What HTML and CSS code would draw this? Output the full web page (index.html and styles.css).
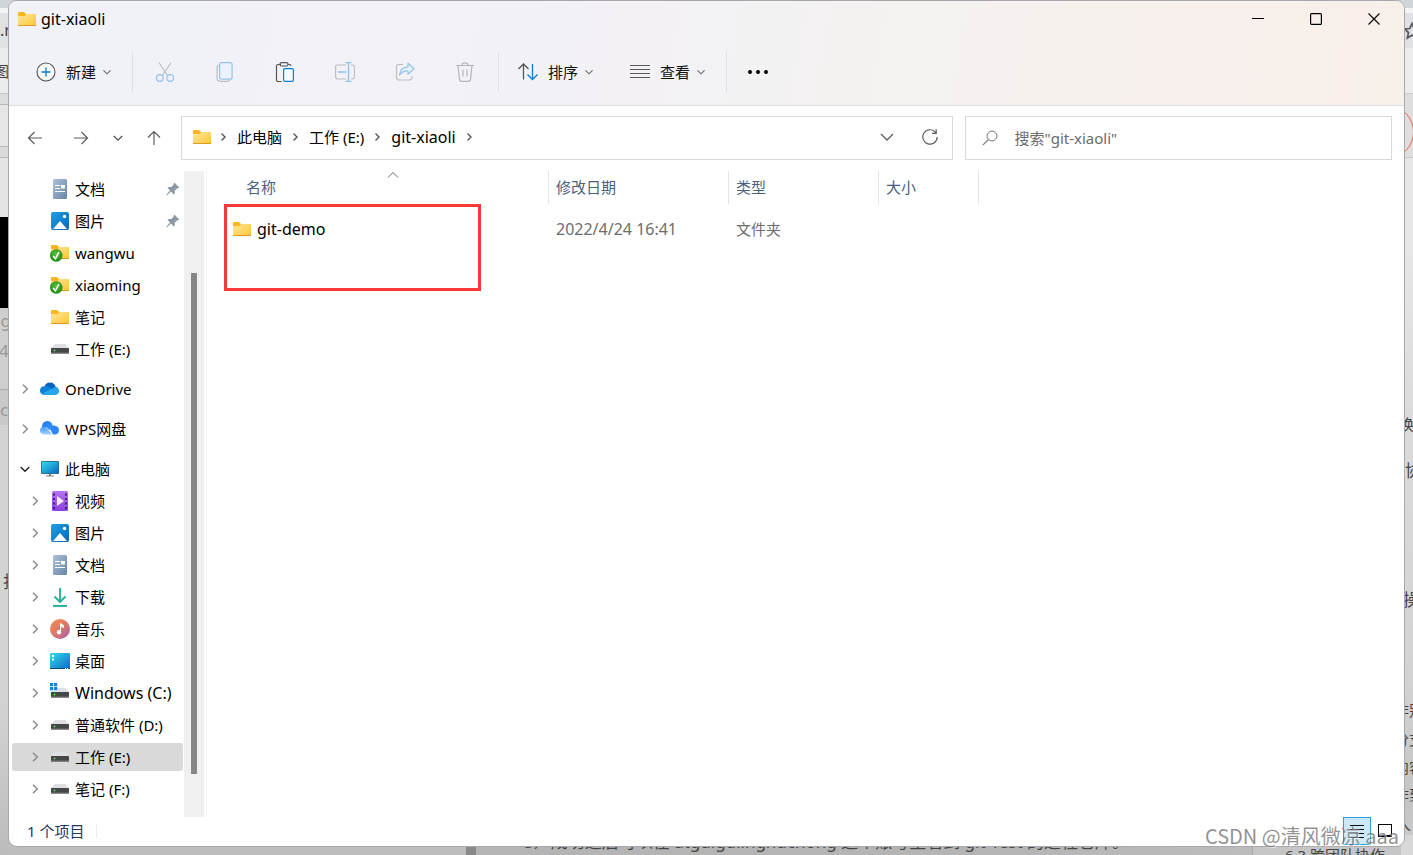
FILE: index.html
```html
<!DOCTYPE html>
<html lang="zh-CN">
<head>
<meta charset="utf-8">
<title>git-xiaoli</title>
<link rel="stylesheet" href="styles.css">
</head>
<body>
<svg class="sprite" aria-hidden="true">
  <defs>
    <linearGradient id="gFolder" x1="0" y1="0" x2="1" y2="1"><stop offset="0" stop-color="#ffe69a"/><stop offset="1" stop-color="#fdc636"/></linearGradient>
    <linearGradient id="gPic" x1="0" y1="0" x2="1" y2="1"><stop offset="0" stop-color="#1da3e8"/><stop offset="1" stop-color="#0a63b5"/></linearGradient>
    <linearGradient id="gDoc" x1="0" y1="0" x2="1" y2="1"><stop offset="0" stop-color="#adc2d8"/><stop offset="1" stop-color="#6684a6"/></linearGradient>
    <linearGradient id="gVid" x1="0" y1="0" x2="0" y2="1"><stop offset="0" stop-color="#b873f5"/><stop offset="1" stop-color="#8a3fe0"/></linearGradient>
    <linearGradient id="gMus" x1="0" y1="0" x2="1" y2="1"><stop offset="0" stop-color="#f3914f"/><stop offset=".5" stop-color="#dd7668"/><stop offset="1" stop-color="#a15fb4"/></linearGradient>
    <linearGradient id="gDesk" x1="0" y1="0" x2="1" y2="1"><stop offset="0" stop-color="#32dcea"/><stop offset="1" stop-color="#0a69c4"/></linearGradient>
    <linearGradient id="gWps" x1="0" y1="0" x2="1" y2="1"><stop offset="0" stop-color="#1c6df5"/><stop offset="1" stop-color="#3aa0ff"/></linearGradient>
    <linearGradient id="gWpsLight" x1="0" y1="0" x2="0" y2="1"><stop offset="0" stop-color="#3f94ff"/><stop offset="1" stop-color="#a4d3ff"/></linearGradient>
    <radialGradient id="gOk" cx=".5" cy=".35" r=".65"><stop offset="0" stop-color="#58c43a"/><stop offset="1" stop-color="#1d8a10"/></radialGradient>
  </defs>
  <symbol id="folder" viewBox="0 0 20 20">
    <path d="M1 4.2Q1 3 2.2 3H7l2 2v4H1z" fill="#fcb61c"/>
    <path d="M1 7h6.500l2-2H19v12H1z" fill="url(#gFolder)"/>
    <path d="M1 16h18v.4q0 .6-.8.600H1.800q-.8 0-.8-.6z" fill="#dd9b20"/>
  </symbol>
  <symbol id="folder-ok" viewBox="0 0 20 20">
    <path d="M1 3.200Q1 2 2.200 2H7l2 2v4H1z" fill="#fcb61c"/>
    <path d="M1 6h6.500l2-2H19v12H1z" fill="url(#gFolder)"/>
    <path d="M10 15h9v1h-9z" fill="#dd9b20"/>
    <circle cx="6.200" cy="12.500" r="6" fill="url(#gOk)" stroke="#17750c" stroke-width=".5"/>
    <path d="M3.200 13l2.200 2.800L9 9" fill="none" stroke="#fff" stroke-width="1.600"/>
  </symbol>
  <symbol id="doc" viewBox="0 0 20 20">
    <rect x="3" y="0" width="14" height="20" rx="1.500" fill="url(#gDoc)"/>
    <path d="M5 6.500h5M5 9.500h5M5 12.500h10" stroke="#fff" stroke-width="1.200"/><path d="M11 6h4v3.500h-4z" fill="#fff"/>
  </symbol>
  <symbol id="pic" viewBox="0 0 20 20">
    <rect x="1" y="1" width="18" height="18" rx="2" fill="url(#gPic)"/>
    <path d="M3 18L10 10l7 8z" fill="#f4faff"/><circle cx="14.500" cy="5.500" r="1.700" fill="#fff"/>
  </symbol>
  <symbol id="drive" viewBox="0 0 20 20">
    <path d="M4.500 5h11L19 9.500H1z" fill="#dfe0e3"/><rect x="1" y="9" width="18" height="5.500" rx=".6" fill="#454647"/><path d="M1 14h18" stroke="#727476"/><circle cx="4.500" cy="11.500" r=".9" fill="#3df04e"/>
  </symbol>
  <symbol id="drive-win" viewBox="0 0 20 20">
    <path d="M7 5h9l3 4.500H1V8h6z" fill="#dfe0e3"/><rect x="1" y="9" width="18" height="5.500" rx=".6" fill="#454647"/><path d="M1 14h18" stroke="#727476"/><circle cx="4.500" cy="11.500" r=".9" fill="#3df04e"/>
    <path d="M0 0h3.200v3.200H0zM4 0h3.200v3.200H4zM0 4h3.200v3.200H0zM4 4h3.200v3.200H4z" fill="#1482d6"/>
  </symbol>
  <symbol id="onedrive" viewBox="0 0 20 20">
    <path d="M4.500 7.500A5.800 5.800 0 0 1 15.600 8L11 12z" fill="#0763bd"/>
    <path d="M2 15.200A4.300 4.300 0 0 1 4.800 7.300Q7 6.600 9 8l5 3-9 5z" fill="#0d83d8"/>
    <path d="M14.500 7.500A4.300 4.300 0 0 1 17.500 15z" fill="#1490df"/>
    <path d="M2 15l9-5q3-2.300 6-1.200a3.900 3.900 0 0 1-1.500 7.200H4.500Q3 16 2 15z" fill="#27a6ea"/>
  </symbol>
  <symbol id="wps" viewBox="0 0 20 20">
    <path d="M2.200 8.500A5.300 5.300 0 0 1 12.500 6l-3 5z" fill="url(#gWps)"/>
    <path d="M9 8Q12 5 15.500 7a4.300 4.300 0 0 1-.5 8.500h-2z" fill="#2e86fa"/>
    <path d="M3.800 15.500a4 4 0 1 1 2.500-7.200L13 15.500z" fill="url(#gWpsLight)"/>
    <path d="M6 8.200l6.700 7.300" stroke="#fff" stroke-width=".7"/>
  </symbol>
  <symbol id="pc" viewBox="0 0 20 20">
    <rect x="1" y="2" width="18" height="13" rx="1" fill="#2b6888"/><rect x="1.800" y="2.800" width="16.400" height="11.400" fill="url(#gDesk)"/><path d="M9 15h2v1.500h3v1H6v-1h3z" fill="#7b8085"/>
  </symbol>
  <symbol id="video" viewBox="0 0 20 20">
    <rect x="2" y="0" width="16" height="20" rx="1.500" fill="url(#gVid)"/>
    <path d="M4 2.500v16M16 2.500v16" stroke="#43206f" stroke-width="2" stroke-dasharray="2 2.500"/><path d="M7 5v10l7-5z" fill="#f4ebff"/>
  </symbol>
  <symbol id="download" viewBox="0 0 20 20">
    <path d="M10 1v14M4.500 9.500L10 15l5.500-5.500" fill="none" stroke="#20ae94" stroke-width="1.800"/><path d="M3 18h14v1.800H3z" fill="#18aa98"/>
  </symbol>
  <symbol id="music" viewBox="0 0 20 20">
    <circle cx="10" cy="10" r="10" fill="url(#gMus)"/><path d="M10.500 13V4.500l3 2v2l-2-1.200" fill="#fff" stroke="#fff"/><circle cx="9" cy="13.200" r="2.200" fill="#fff"/>
  </symbol>
  <symbol id="desktop" viewBox="0 0 20 20">
    <rect x="0" y="2" width="20" height="16" rx="1" fill="url(#gDesk)"/><path d="M0 17h20v.4q0 .6-1 .6H1q-1 0-1-.6z" fill="#124b78"/><path d="M2 4h2v2H2zM2 7.500h2v2H2zM15 17h1v1h-1zM17 17h1v1h-1z" fill="#fff"/>
  </symbol>
  <symbol id="pin" viewBox="0 0 14 14">
    <path d="M8.500.8l4.700 4.700-1 .9-1-.1-2.500 2.500.2 2.700-1.100 1-2.900-2.900L1 13.200H.5v-.6l3.600-4L1.500 6l1-1.100 2.700.2 2.500-2.500-.2-.9z" fill="#8b98a4"/>
  </symbol>
  <symbol id="chev-r" viewBox="0 0 10 10"><path d="M3 .7L7.300 5 3 9.300" fill="none" stroke="currentColor" stroke-width="1.400"/></symbol>
  <symbol id="chev-s" viewBox="0 0 10 10"><path d="M3.500 1.500L7 5 3.500 8.500" fill="none" stroke="currentColor" stroke-width="1.400"/></symbol>
  <symbol id="chev-d" viewBox="0 0 10 10"><path d="M1.500 3.300L5 6.800l3.500-3.500" fill="none" stroke="currentColor" stroke-width="1.100"/></symbol>
  <symbol id="arrow-l" viewBox="0 0 16 16"><path d="M15 8H1.500M7.500 2L1.500 8l6 6" fill="none" stroke="#5c5c5c" stroke-width="1.200"/></symbol>
</svg>

<div class="backdrop" aria-hidden="true">
  <div class="edge edge-left"></div>
  <div class="edge edge-right"></div>
  <div class="edge edge-bottom"></div>
  <span class="bg dark l1">.r</span><span class="bg dark l2">图</span>
  <span class="bg pale l3">ng</span><span class="bg pale l4">4(</span><span class="bg pale l5">c</span><span class="bg dark l6">打</span>
  <svg class="star" width="18" height="18" viewBox="0 0 18 18"><path d="M9 1.500l2.200 5 5.300.5-4 3.600 1.200 5.400L9 13.200 4.300 16l1.200-5.400-4-3.600 5.300-.5z" fill="none" stroke="#55585c" stroke-width="1.700"/></svg>
  <span class="ring"></span>
  <span class="bg dark r1">换</span><span class="bg dark r2">协</span><span class="bg dark r3">操</span><span class="bg dark r4">作别</span><span class="bg dark r5">分支</span><span class="bg dark r6">内容</span><span class="bg dark r7">作到</span><span class="bg dark r8">人</span>
  <span class="bg dark b1">5）成功之后可以在 atguigulinghuchong 这个账号里看到 git-Test 的远程仓库。</span>
  <span class="bg dark b2">6.3 跨团队协作</span>
</div>

<main class="window">
  <header class="top">
    <div class="titlebar">
      <svg class="i20"><use href="#folder"/></svg>
      <h1 class="latin">git-xiaoli</h1>
      <div class="controls">
        <button aria-label="最小化"><svg width="12" height="12"><path d="M0 5.500h12" stroke="#000"/></svg></button>
        <button aria-label="最大化"><svg width="12" height="12"><rect x=".6" y=".6" width="10.800" height="10.800" rx="1" fill="none" stroke="#000" stroke-width="1.200"/></svg></button>
        <button aria-label="关闭"><svg width="12" height="12"><path d="M.5.500l11 11M11.500.500l-11 11" stroke="#000" stroke-width="1.100"/></svg></button>
      </div>
    </div>
    <div class="toolbar">
      <button class="cmd new"><svg class="i20" viewBox="0 0 20 20" fill="none"><circle cx="10" cy="10" r="9" fill="#fafafc" stroke="#555" stroke-width="1.100"/><path d="M10 5.500v9M5.500 10h9" stroke="#0c7bd0" stroke-width="1.300"/></svg>新建<svg class="i10"><use href="#chev-d"/></svg></button>
      <i class="sep"></i>
      <div class="tools">
        <button aria-label="剪切" disabled><svg class="i20" viewBox="0 0 20 20" fill="none" stroke-width="1.200"><path d="M4 .5l8.500 13M16 .5L7.500 13.500" stroke="#bcbec2"/><circle cx="4.800" cy="16" r="3.300" stroke="#93c4ea"/><circle cx="15.200" cy="16" r="3.300" stroke="#93c4ea"/></svg></button>
        <button aria-label="复制" disabled><svg class="i20" viewBox="0 0 20 20" fill="none" stroke-width="1.200"><path d="M3.500 3Q2 4 2 6v10q0 3.400 3.500 3.400H12q2 0 3-1.400" stroke="#bcbec2"/><rect x="4.600" y=".6" width="12.500" height="16.600" rx="2" fill="#ecf2f9" stroke="#93c4ea"/></svg></button>
        <button aria-label="粘贴"><svg class="i20" viewBox="0 0 20 20" fill="none" stroke-width="1.200"><path d="M6 2.500H3Q1.500 2.500 1.500 4v14q0 1.500 1.500 1.500h3.500M13 2.500h1.500q1.500 0 1.500 1.500" stroke="#555"/><rect x="5" y=".6" width="8" height="3.400" rx="1.500" stroke="#555"/><rect x="8.600" y="6.600" width="9.800" height="12.800" rx="1.500" fill="#f5faff" stroke="#0c7bd0"/></svg></button>
        <button aria-label="重命名" disabled><svg class="i20" viewBox="0 0 20 20" fill="none" stroke-width="1.200"><path d="M11 3H2Q.6 3 .6 4.500v10Q.6 17 2.500 17H11M16 3h1.500q2 0 2 2v9.500q0 2.500-2 2.500H16" stroke="#bcbec2"/><path d="M3 10h8M10.500.600h6M10.500 19.400h6M13.500.600v18.800" stroke="#93c4ea" stroke-width="1.500"/></svg></button>
        <button aria-label="共享" disabled><svg class="i20" viewBox="0 0 20 20" fill="none" stroke-width="1.200"><path d="M8 2.500H3.500Q1.500 2.500 1.500 5v10.500Q1.500 18 4 18h10q3 0 3-2.500V14" stroke="#bcbec2"/><path d="M13 1.200l6 5.500-6 5.500V9Q8 8.500 4.500 13 5 5.500 13 4.800z" fill="#ecf4fb" stroke="#93c4ea" stroke-linejoin="round"/></svg></button>
        <button aria-label="删除" disabled><svg class="i20" viewBox="0 0 20 20" fill="none" stroke="#b5b6b9" stroke-width="1.200"><path d="M1 3.500h18M7 3Q7 .800 10 .800T13 3M3 3.500l1.400 13.500q.2 2.300 2.500 2.300h6.200q2.300 0 2.500-2.300L17 3.500M8 7.500v7M12 7.500v7"/></svg></button>
      </div>
      <i class="sep"></i>
      <button class="cmd"><svg class="i20" viewBox="0 0 20 20" fill="none" stroke-width="1.300"><path d="M5.500 17.500V2M.5 7l5-5 5 5" stroke="#555"/><path d="M14.500 2v15.500M9.500 12.500l5 5 5-5" stroke="#0c7bd0"/></svg>排序<svg class="i10"><use href="#chev-d"/></svg></button>
      <button class="cmd view"><svg class="i20" viewBox="0 0 20 20"><path d="M0 3.500h20M0 7.500h20M0 11.500h20M0 15.500h20" stroke="#5a5a5a" stroke-width="1.100"/></svg>查看<svg class="i10"><use href="#chev-d"/></svg></button>
      <i class="sep"></i>
      <button class="more" aria-label="更多"><svg width="20" height="6"><circle cx="2" cy="3" r="2"/><circle cx="10" cy="3" r="2"/><circle cx="18" cy="3" r="2"/></svg></button>
    </div>
  </header>

  <div class="addressrow">
    <div class="history">
      <button aria-label="后退"><svg class="i16"><use href="#arrow-l"/></svg></button>
      <button aria-label="前进"><svg class="i16 flip"><use href="#arrow-l"/></svg></button>
      <button class="recent" aria-label="最近的位置"><svg width="12" height="12"><use href="#chev-d"/></svg></button>
      <button aria-label="向上"><svg class="i16 up"><use href="#arrow-l"/></svg></button>
    </div>
    <nav class="address" aria-label="地址">
      <svg class="i20"><use href="#folder"/></svg>
      <svg class="i10 crumb"><use href="#chev-s"/></svg><a href="#">此电脑</a>
      <svg class="i10 crumb"><use href="#chev-s"/></svg><a href="#">工作 (E:)</a>
      <svg class="i10 crumb"><use href="#chev-s"/></svg><a href="#" class="latin">git-xiaoli</a>
      <svg class="i10 crumb"><use href="#chev-s"/></svg>
      <button class="drop" aria-label="以前的位置"><svg class="i16" viewBox="0 0 16 16"><path d="M2 5l6 6 6-6" fill="none" stroke="#5c5c5c" stroke-width="1.300"/></svg></button>
      <button class="refresh" aria-label="刷新"><svg class="i16" viewBox="0 0 16 16"><path d="M13.500 3.300A7.200 7.200 0 1 0 15.200 8M14.200.300v4H10" fill="none" stroke="#5c5c5c" stroke-width="1.200"/></svg></button>
    </nav>
    <label class="search"><svg class="i16" viewBox="0 0 16 16"><circle cx="10" cy="6" r="4.900" fill="none" stroke="#777"/><path d="M6.500 9.500L.8 15.200" stroke="#777" stroke-width="1.100"/></svg><input type="text" placeholder='搜索"git-xiaoli"' aria-label="搜索"></label>
  </div>

  <div class="content">
    <aside class="sidebar">
      <ul class="tree">
        <li class="item sub"><svg class="i20"><use href="#doc"/></svg>文档<svg class="pin"><use href="#pin"/></svg></li>
        <li class="item sub"><svg class="i20"><use href="#pic"/></svg>图片<svg class="pin"><use href="#pin"/></svg></li>
        <li class="item sub"><svg class="i20"><use href="#folder-ok"/></svg>wangwu</li>
        <li class="item sub"><svg class="i20"><use href="#folder-ok"/></svg>xiaoming</li>
        <li class="item sub"><svg class="i20"><use href="#folder"/></svg>笔记</li>
        <li class="item sub"><svg class="i20"><use href="#drive"/></svg>工作 (E:)</li>
        <li class="item root"><svg class="i10 tw"><use href="#chev-r"/></svg><svg class="i20"><use href="#onedrive"/></svg>OneDrive</li>
        <li class="item root"><svg class="i10 tw"><use href="#chev-r"/></svg><svg class="i20"><use href="#wps"/></svg>WPS网盘</li>
        <li class="item root open"><svg class="i10 tw"><use href="#chev-r"/></svg><svg class="i20"><use href="#pc"/></svg>此电脑</li>
        <li class="item leaf"><svg class="i10 tw"><use href="#chev-r"/></svg><svg class="i20"><use href="#video"/></svg>视频</li>
        <li class="item leaf"><svg class="i10 tw"><use href="#chev-r"/></svg><svg class="i20"><use href="#pic"/></svg>图片</li>
        <li class="item leaf"><svg class="i10 tw"><use href="#chev-r"/></svg><svg class="i20"><use href="#doc"/></svg>文档</li>
        <li class="item leaf"><svg class="i10 tw"><use href="#chev-r"/></svg><svg class="i20"><use href="#download"/></svg>下载</li>
        <li class="item leaf"><svg class="i10 tw"><use href="#chev-r"/></svg><svg class="i20"><use href="#music"/></svg>音乐</li>
        <li class="item leaf"><svg class="i10 tw"><use href="#chev-r"/></svg><svg class="i20"><use href="#desktop"/></svg>桌面</li>
        <li class="item leaf latin"><svg class="i10 tw"><use href="#chev-r"/></svg><svg class="i20"><use href="#drive-win"/></svg>Windows (C:)</li>
        <li class="item leaf"><svg class="i10 tw"><use href="#chev-r"/></svg><svg class="i20"><use href="#drive"/></svg>普通软件 (D:)</li>
        <li class="item leaf selected"><svg class="i10 tw"><use href="#chev-r"/></svg><svg class="i20"><use href="#drive"/></svg>工作 (E:)</li>
        <li class="item leaf"><svg class="i10 tw"><use href="#chev-r"/></svg><svg class="i20"><use href="#drive"/></svg>笔记 (F:)</li>
      </ul>
      <div class="track"><div class="thumb"></div></div>
    </aside>
    <section class="files">
      <table>
        <colgroup><col class="c-name"><col class="c-date"><col class="c-type"><col class="c-size"></colgroup>
        <thead><tr><th class="name">名称<svg class="caret" width="12" height="8"><path d="M1 6.500l5-5 5 5" fill="none" stroke="#666"/></svg></th><th>修改日期</th><th>类型</th><th>大小</th></tr></thead>
        <tbody><tr><td><span class="file latin"><svg class="i20"><use href="#folder"/></svg>git-demo</span></td><td class="latin">2022/4/24 16:41</td><td>文件夹</td><td></td></tr></tbody>
      </table>
      <div class="highlight"></div>
    </section>
  </div>

  <footer class="status">
    <span class="count">1 个项目</span>
    <div class="modes">
      <button class="on" aria-label="详细信息"><svg width="14" height="14"><path d="M0 1.500h14M0 5.500h14M0 9.500h14M0 13.500h14" stroke="#111"/></svg></button>
      <button aria-label="大图标"><svg width="14" height="14"><rect x=".5" y=".5" width="13" height="11" fill="#fff" stroke="#000"/><path d="M0 12.500h14" stroke="#000"/></svg></button>
    </div>
  </footer>
</main>
<div class="watermark">CSDN @清风微凉 aaa</div>
</body>
</html>
```
FILE: styles.css
```css
* { box-sizing: border-box; }
body {
  margin: 0;
  height: 100vh;
  padding: 0 8px 8px;
  position: relative;
  overflow: hidden;
  background: #c4c4c4;
  color: #000;
  font: 15px/20px "Noto Sans", "Noto Sans CJK SC", sans-serif;
}
button { border: 0; padding: 0; background: none; font: inherit; color: #111; display: flex; align-items: center; justify-content: center; }
svg { flex: none; display: block; }
.latin { font-size: 16px; }
.sprite { position: absolute; width: 0; height: 0; }
.i20 { width: 20px; height: 20px; }
.i16 { width: 16px; height: 16px; }
.i10 { width: 10px; height: 10px; }

/* page behind the window */
.backdrop { position: absolute; inset: 0; overflow: hidden; }
.edge { position: absolute; }
.edge-left { left: 0; top: 0; bottom: 0; width: 12px;
  background: linear-gradient(#d0d5d9 0 8px, #f4f4f5 8px 13px, #dfe1e4 13px 48px, #ebebeb 48px 93px, #c5c5c5 93px 94px, #dcdcdc 94px 104px, #b8b8b8 104px 105px, #e6e6e6 105px 146px, #b8b8b8 146px 147px, #dadada 147px 157px, #b8b8b8 157px 158px, #e4e4e4 158px 217px, #000 217px 308px, #cfcfcf 308px 389px, #aaa 389px 390px, #c9c9c9 390px 425px, #d3d3d3 425px 700px, #bcbcbc); }
.edge-right { right: 0; top: 0; bottom: 0; width: 12px;
  background: linear-gradient(#d0d5d9 0 8px, #f4f4f5 8px 13px, #dfe1e4 13px 48px, #ededed 48px 93px, #cfcfcf 93px 94px, #dedede 94px 157px, #c8c8c8 157px 158px, #e6e6e6 158px 250px, #dcdcdc 400px, #d2d2d2 690px, #c4c4c4 800px, #c9c9c9 835px, #d8d8d8 835px); }
.edge-bottom { left: 12px; right: 12px; bottom: 0; height: 10px;
  background: linear-gradient(90deg, #bdbdbd 0 454px, #888 454px 464px, #b4b4b4 464px 1000px, #bcbcbc 1240px, #aaa 1240px 1241px, #c6c6c6 1241px); }
.bg { position: absolute; white-space: nowrap; }
.dark { color: #444; }
.pale { color: #999; }
.l1 { left: 0; top: 20px; font-size: 16px; }
.l2 { left: -6px; top: 61px; }
.l3 { left: -10px; top: 311px; font-size: 17px; }
.l4 { left: -1px; top: 341px; font-size: 17px; }
.l5 { left: 0; top: 400px; font-size: 17px; }
.l6 { left: 3px; top: 572px; font-size: 17px; }
.star { position: absolute; left: 1403px; top: 22px; }
.ring { position: absolute; left: 1360px; top: 105px; width: 54px; height: 54px; border: 1px solid #e8664a; border-radius: 50%; }
.r1 { left: 1399px; top: 414px; }
.r2 { left: 1405px; top: 461px; font-size: 17px; }
.r3 { left: 1403px; top: 590px; font-size: 17px; }
.r4 { left: 1394px; top: 700px; }
.r5 { left: 1394px; top: 729px; }
.r6 { left: 1394px; top: 757px; }
.r7 { left: 1394px; top: 785px; }
.r8 { left: 1396px; top: 814px; }
.b1 { left: 524px; top: 832px; font-size: 17px; }
.b2 { left: 1285px; top: 845px; }

/* window */
.window {
  position: relative;
  height: 100%;
  display: flex;
  flex-direction: column;
  overflow: hidden;
  background: #fff;
  border: 1px solid #a9a9ad;
  border-radius: 9px;
}
.top { background: linear-gradient(100deg, #f0f2f8, #f3f1f6 45%, #f3f2f2 55%, #f6f1ee 72%, #f8efea 96%, #f6f1e9); border-bottom: 1px solid #dfdfe2; }
.titlebar { display: flex; align-items: center; height: 38px; padding: 0 1px 2px 8px; }
.titlebar h1 { margin: 0 auto 0 4px; font-weight: 400; }
.controls { display: flex; }
.controls button { width: 58px; height: 36px; }
.toolbar { display: flex; align-items: center; height: 66px; padding-left: 27px; }
.cmd { gap: 10px; }
.cmd .i10 { margin-left: -4px; color: #666; }
.new { margin-right: 20px; }
.sep { width: 1px; height: 40px; background: #e0e0e4; }
.tools { display: flex; padding: 0 3px 0 2px; }
.tools button { width: 60px; height: 40px; }
.sep + .cmd { margin-left: 19px; }
.view { margin: 0 20px 0 36px; }
.more { margin-left: 21px; }

.addressrow { display: grid; grid-template-columns: auto minmax(0, 11fr) minmax(0, 6fr); align-items: center; height: 65px; padding: 0 12px 1px 3px; }
.history { display: flex; margin-right: 5px; }
.history button { width: 46px; height: 44px; }
.history .recent { width: 28px; color: #555; }
.history button:last-child { width: 44px; }
.flip { transform: scaleX(-1); }
.up { transform: rotate(90deg); }
.address, .search { display: flex; align-items: center; height: 44px; border: 1px solid #d9d9d9; }
.address { padding: 0 9px 2px 10px; margin-right: 12px; }
.address .i20 { margin-right: -2px; }
.address a { color: #000; text-decoration: none; white-space: nowrap; }
.crumb { margin: 0 9px 0 8px; color: #555; }
.drop { margin-left: auto; width: 60px; height: 40px; }
.refresh { width: 26px; height: 40px; }
.search { padding: 0 16px; gap: 17px; }
.search input { flex: 1; min-width: 0; border: 0; padding: 0; outline: 0; background: none; font: inherit; }
.search input::placeholder { color: #6b6b6b; opacity: 1; }

.content { flex: 1; min-height: 0; display: flex; }
.sidebar { flex: none; display: flex; width: 198px; padding: 0 2px 0 3px; border-right: 1px solid #f2f2f2; }
.tree { flex: 1; min-width: 0; margin: 0; padding: 4px 1px 0 0; list-style: none; display: flex; flex-direction: column; gap: 4px; }
.item { flex: none; display: flex; align-items: center; height: 28px; border-radius: 2px; white-space: nowrap; }
.item .i20 { margin-right: 5px; }
.sub { padding-left: 38px; }
.root { margin-top: 8px; padding-left: 8px; }
.leaf { padding-left: 18px; }
.tw { margin-right: 10px; color: #888; }
.open .tw { transform: rotate(90deg); color: #222; }
.selected { background: #d9d9d9; }
.pin { width: 14px; height: 14px; margin: 0 3px 0 auto; }
.track { width: 20px; padding: 102px 7px 43px; background: #f0f0f0; }
.thumb { height: 100%; background: #858585; }

.files { flex: 1; min-width: 0; position: relative; }
table { table-layout: fixed; width: 772px; border-collapse: separate; border-spacing: 0; }
.c-name { width: 342px; }
.c-date { width: 180px; }
.c-type { width: 150px; }
.c-size { width: 100px; }
th { height: 33px; padding: 0 0 2px 7px; text-align: left; font-weight: 400; color: #4b607e; border-right: 1px solid #e5e5e5; position: relative; }
th.name { padding-left: 39px; }
.caret { position: absolute; left: 180px; top: 0; }
td { height: 50px; padding: 0 0 0 7px; color: #6d6d6d; }
td:first-child { padding-left: 25px; color: #000; }
.file { display: flex; align-items: center; gap: 5px; }
.highlight { position: absolute; left: 17px; top: 33px; width: 257px; height: 87px; border: 3px solid #fa3838; }

.status { display: flex; align-items: flex-start; justify-content: space-between; height: 29px; padding: 0 5px 0 18px; color: #1e3a5f; }
.count { margin-top: 7px; padding-right: 12px; border-right: 1px solid #ececec; line-height: 14px; }
.modes { display: flex; }
.modes button { width: 28px; height: 28px; }
.modes .on { background: #cce8f6; border: 1px solid #2a9fd6; }
.watermark { position: absolute; right: 14px; bottom: 6px; font: 20px/26px "Noto Sans CJK SC", sans-serif; color: rgba(110, 110, 110, .75); text-shadow: 1px 1px 0 rgba(255, 255, 255, .6); white-space: nowrap; }
```
